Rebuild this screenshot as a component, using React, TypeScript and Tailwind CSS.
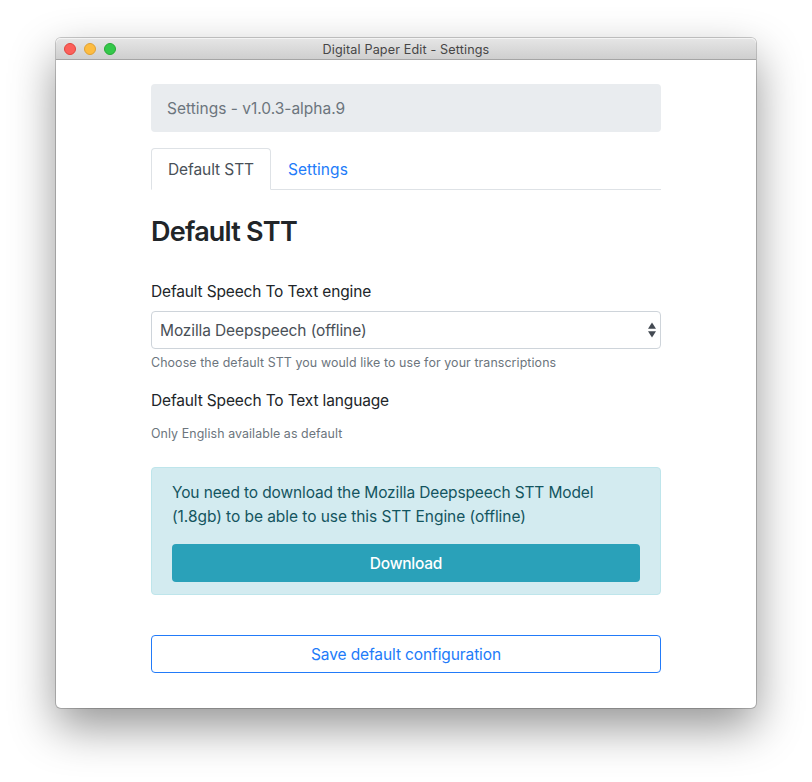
import type { ReactNode } from "react";

function TitleBar() {
  return (
    <header className="grid h-[22px] grid-cols-[1fr_auto_1fr] items-center rounded-t-[5px] border-b border-[#a5a5a5] bg-linear-to-b from-[#e6e6e6] to-[#cfcfcf] px-2 shadow-[inset_0_1px_0_#f4f4f4]">
      <div className="flex gap-2">
        <span className="size-3 rounded-full border border-[#e2453c] bg-[#fc605b]" />
        <span className="size-3 rounded-full border border-[#dfa134] bg-[#fdbc40]" />
        <span className="size-3 rounded-full border border-[#27aa35] bg-[#34c84a]" />
      </div>
      <h1 className="pt-[3px] text-[12.6px] leading-[18px] tracking-[0.14px] text-[#464646]">
        Digital Paper Edit - Settings
      </h1>
    </header>
  );
}

function Tabs() {
  return (
    <nav className="mt-4 flex h-[42px] border-b border-[#dee2e6]">
      <a className="-mb-px w-[120px] rounded-t border border-[#dee2e6] border-b-white bg-white px-4 pt-[9px] tracking-[-0.09px] whitespace-nowrap text-[#495057]">
        Default STT
      </a>
      <a className="px-[17px] pt-2.5 tracking-[0.07px] text-[#227bf9]">Settings</a>
    </nav>
  );
}

function SelectArrows() {
  return (
    <svg className="h-4 w-2" viewBox="0 0 8 16" fill="#434a52">
      <path d="M4 0.4 8 6.7H0Z" />
      <path d="M4 15.6 0 9.3H8Z" />
    </svg>
  );
}

function HelpText({ children, className }: { children: ReactNode; className: string }) {
  return <small className={`block text-[12.4px] leading-[19px] text-[#6c757d] ${className}`}>{children}</small>;
}

export default function App() {
  return (
    <div className="h-[782px] w-[812px] overflow-hidden bg-white px-14 pt-[38px] font-['Inter','Liberation_Sans',sans-serif] text-[15.5px] leading-6 text-[#212529]">
      <div className="h-[670px] w-[700px] rounded-[5px] bg-white shadow-[0_0_0_1px_rgba(0,0,0,0.2),0_19px_46px_rgba(0,0,0,0.42)]">
        <TitleBar />
        <main className="mx-auto w-[510px] pt-6">
          <div className="h-12 rounded bg-[#e9ecef] px-4 pt-[13px] text-[#6c757d]">Settings - v1.0.3-alpha.9</div>
          <Tabs />
          <h2 className="mt-[25px] text-[27px] leading-[34px] font-semibold tracking-[-0.78px]">Default STT</h2>

          <label className="mt-[31px] block tracking-[-0.16px]">Default Speech To Text engine</label>
          <div className="mt-[7px] flex h-[38px] items-center justify-between rounded border border-[#ced4da] pr-1 pl-2 tracking-[-0.115px] text-[#495057]">
            <span className="pt-0.5">Mozilla Deepspeech (offline)</span>
            <SelectArrows />
          </div>
          <HelpText className="mt-1 tracking-[0.1px]">
            Choose the default STT you would like to use for your transcriptions
          </HelpText>

          <label className="mt-[17px] block tracking-[-0.148px]">Default Speech To Text language</label>
          <HelpText className="mt-[11px] tracking-[0.085px]">Only English available as default</HelpText>

          <section className="mt-6 h-32 rounded border border-[#bee5eb] bg-[#d3ebf0] px-5 pt-[13px] text-[#13555f]">
            <p>
              <span className="block tracking-[-0.13px] whitespace-nowrap">
                You need to download the Mozilla Deepspeech STT Model
              </span>
              <span className="block tracking-[-0.054px]">(1.8gb) to be able to use this STT Engine (offline)</span>
            </p>
            <button className="mt-[15px] block h-[38px] w-full rounded bg-[#2aa1b9] pt-0.5 font-medium tracking-[-0.25px] text-white">
              Download
            </button>
          </section>

          <button className="mt-10 block h-[38px] w-full rounded border border-[#227bf9] pt-0.5 tracking-[-0.108px] text-[#227bf9]">
            Save default configuration
          </button>
        </main>
      </div>
    </div>
  );
}
